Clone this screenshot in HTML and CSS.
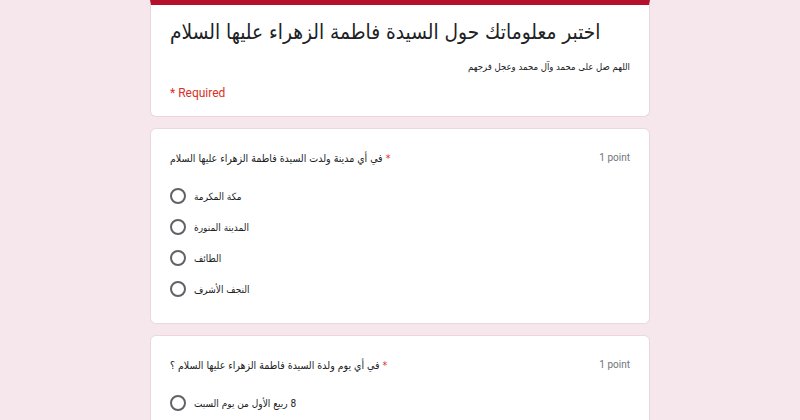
FILE: index.html
```html
<!DOCTYPE html>
<html lang="ar">
<head>
    <meta charset="UTF-8">
    <meta name="viewport" content="width=device-width, initial-scale=1.0">
    <title>اختبر معلوماتك حول السيدة فاطمة الزهراء عليها السلام</title>
    <link rel="stylesheet" href="styles.css">
</head>
<body>

<div class="form">
    <div class="card header-card">
        <h1 class="form-title"><span dir="rtl">اختبر معلوماتك حول السيدة فاطمة الزهراء عليها السلام</span></h1>
        <div class="form-desc" dir="rtl">اللهم صل على محمد وآل محمد وعجل فرجهم</div>
        <div class="required-note">* Required</div>
    </div>

    <div class="card question">
        <div class="question-head">
            <div class="question-text"><span dir="rtl">في أي مدينة ولدت السيدة فاطمة الزهراء عليها السلام</span> <span class="star">*</span></div>
            <div class="points">1 point</div>
        </div>
        <div class="options">
            <label class="option"><span class="radio"></span><span dir="rtl">مكة المكرمة</span></label>
            <label class="option"><span class="radio"></span><span dir="rtl">المدينة المنورة</span></label>
            <label class="option"><span class="radio"></span><span dir="rtl">الطائف</span></label>
            <label class="option"><span class="radio"></span><span dir="rtl">النجف الأشرف</span></label>
        </div>
    </div>

    <div class="card question">
        <div class="question-head">
            <div class="question-text"><span dir="rtl">في أي يوم ولدة السيدة فاطمة الزهراء عليها السلام ؟</span> <span class="star">*</span></div>
            <div class="points">1 point</div>
        </div>
        <div class="options">
            <label class="option"><span class="radio"></span><span dir="rtl">8 ربيع الأول من يوم السبت</span></label>
        </div>
    </div>
</div>

</body>
</html>
```

FILE: styles.css
```css
body {
    margin: 0;
    background-color: #f6e7ed;
    font-family: "DejaVu Sans Condensed", "DejaVu Sans", "Liberation Sans", sans-serif;
    color: #202124;
}

.form {
    width: 500px;
    margin: 0 auto;
    display: flex;
    flex-direction: column;
    gap: 11px;
}

.card {
    background-color: #ffffff;
    border-radius: 6px;
    border: 1px solid #ead8de;
    padding: 0 19px;
}

.header-card {
    border-top: 5px solid #b5102e;
    border-radius: 0 0 6px 6px;
    padding-top: 11px;
    padding-bottom: 16px;
}

.form-title {
    font-size: 20.7px;
    font-weight: normal;
    margin: 0;
    line-height: 32px;
    white-space: nowrap;
    text-align: left;
}

.form-desc {
    font-size: 9.5px;
    line-height: 12px;
    margin-top: 13px;
    text-align: right;
}

.required-note {
    font-family: Roboto, "Liberation Sans", sans-serif;
    font-size: 12px;
    color: #d93025;
    margin-top: 13px;
}

.question {
    padding-top: 21px;
    padding-bottom: 26px;
}

.question-head {
    display: flex;
    justify-content: space-between;
    align-items: center;
    font-size: 10.5px;
    line-height: 16px;
}

.star {
    color: #d93025;
}

.points {
    font-family: Roboto, "Liberation Sans", sans-serif;
    font-size: 10px;
    color: #70757a;
}

.options {
    display: flex;
    flex-direction: column;
    gap: 15px;
    margin-top: 22px;
}

.option {
    display: flex;
    align-items: center;
    gap: 8px;
    font-size: 10px;
    color: #202124;
    height: 16px;
}

.radio {
    width: 12px;
    height: 12px;
    border: 2px solid #5f6368;
    border-radius: 50%;
}
```
